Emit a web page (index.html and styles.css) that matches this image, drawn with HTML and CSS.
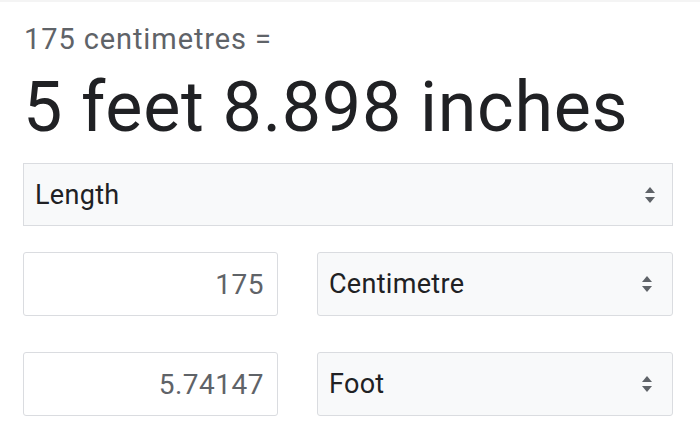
FILE: index.html
```html
<!DOCTYPE html>
<html>
<head>
<meta charset="utf-8">
<link rel="stylesheet" href="styles.css">
</head>
<body>
<div class="topline"></div>
<main class="conv">
  <div class="src">175 centimetres =</div>
  <div class="result">5 feet 8.898 inches</div>
  <div class="sel sel-wide">
    <span class="label">Length</span>
    <span class="arrows"><span class="up"></span><span class="down"></span></span>
  </div>
  <div class="row">
    <div class="num">175</div>
    <div class="sel sel-unit">
      <span class="label">Centimetre</span>
      <span class="arrows"><span class="up"></span><span class="down"></span></span>
    </div>
  </div>
  <div class="row">
    <div class="num">5.74147</div>
    <div class="sel sel-unit">
      <span class="label">Foot</span>
      <span class="arrows"><span class="up"></span><span class="down"></span></span>
    </div>
  </div>
</main>
</body>
</html>
```
FILE: styles.css
```css
html, body {
  margin: 0;
  padding: 0;
  background: #ffffff;
}
body {
  font-family: Roboto, "Noto Sans", Arial, sans-serif;
  width: 700px;
  height: 440px;
  overflow: hidden;
}
.topline {
  height: 2px;
  background: #f4f4f4;
}
.conv {
  padding: 0 27px 0 23px;
  display: flex;
  flex-direction: column;
}
.src {
  margin-top: 18px;
  margin-left: 1px;
  font-size: 29px;
  line-height: 38px;
  letter-spacing: 0.9px;
  color: #5f6368;
}
.result {
  margin-top: 9px;
  font-size: 70px;
  line-height: 80px;
  letter-spacing: 0.7px;
  color: #202124;
}
.sel {
  box-sizing: border-box;
  background: #f8f9fa;
  border: 1px solid #dadce0;
  display: flex;
  align-items: center;
  justify-content: space-between;
  color: #202124;
  font-size: 27px;
  letter-spacing: 0.3px;
}
.sel-wide {
  margin-top: 16px;
  height: 63px;
  padding: 0 17px 0 11px;
}
.row {
  margin-top: 26px;
  display: flex;
  gap: 39px;
  height: 64px;
}
.num {
  box-sizing: border-box;
  width: 255px;
  border: 1px solid #dadce0;
  border-radius: 3px;
  display: flex;
  align-items: center;
  justify-content: flex-end;
  padding-right: 13px;
  font-size: 28px;
  letter-spacing: 0.5px;
  color: #5f6368;
}
.row + .row {
  margin-top: 36px;
}
.sel-unit {
  flex: 1;
  border-radius: 3px;
  padding: 0 20px 0 11px;
}
.arrows {
  display: flex;
  flex-direction: column;
  gap: 4px;
}
.up, .down {
  width: 0;
  height: 0;
  border-left: 5px solid transparent;
  border-right: 5px solid transparent;
}
.up {
  border-bottom: 6px solid #5f6368;
}
.down {
  border-top: 6px solid #5f6368;
}
```
